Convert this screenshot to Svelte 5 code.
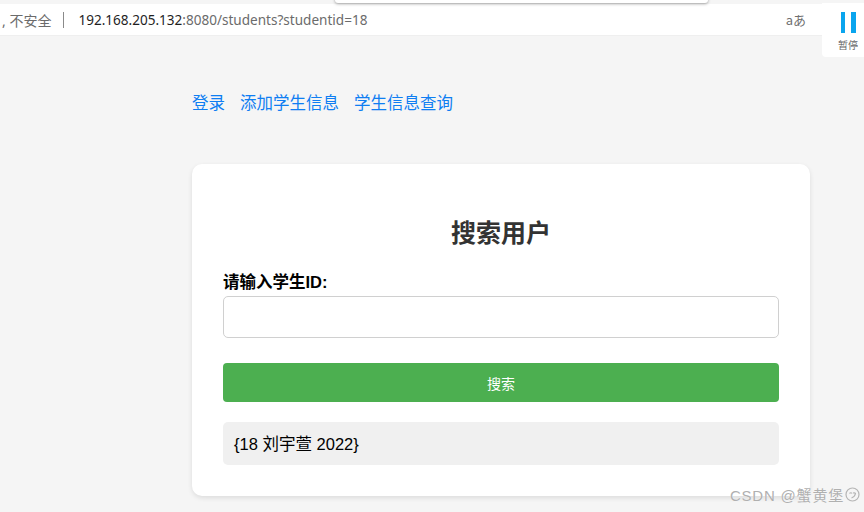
<script>
  let studentId = $state('');
</script>

<div class="page">
  <header class="toolbar">
    <div class="address">
      <span class="secure">, 不安全</span>
      <span class="divider"></span>
      <span class="url"><b>192.168.205.132</b>:8080/students?studentid=18</span>
    </div>
    <span class="read">aあ</span>
  </header>

  <main class="content">
    <nav class="links">
      <a href="#login">登录</a>
      <a href="#add">添加学生信息</a>
      <a href="#query">学生信息查询</a>
    </nav>

    <section class="card">
      <h2>搜索用户</h2>
      <label for="sid">请输入学生ID:</label>
      <input id="sid" type="text" bind:value={studentId} />
      <button type="button">搜索</button>
      <div class="result">{'{'}18 刘宇萱 2022{'}'}</div>
    </section>
  </main>

  <div class="popup"></div>

  <div class="pause">
    <span class="bars"><i></i><i></i></span>
    <span class="pause-label">暂停</span>
  </div>

  <div class="watermark">CSDN @蟹黄堡
    <svg width="15" height="15" viewBox="0 0 15 15" fill="none" stroke="#b5b5b5" stroke-width="1.2">
      <circle cx="7.5" cy="7.5" r="6.5" />
      <path d="M4.5 6.5 Q6 5 7 6.5 M8 6 Q10 5.5 10.5 6.5 Q10 9.5 6.5 11" />
    </svg>
  </div>
</div>

<style>
  :global(body) {
    margin: 0;
    background: #f5f5f5;
  }

  .page {
    position: relative;
    height: 512px;
    overflow: hidden;
    font-family: "Liberation Sans", "Noto Sans CJK SC", sans-serif;
  }

  .toolbar {
    display: flex;
    align-items: center;
    justify-content: space-between;
    box-sizing: border-box;
    height: 32px;
    margin-top: 4px;
    padding-right: 58px;
    background: #fff;
    border-bottom: 1px solid #efefef;
  }

  .address {
    display: flex;
    align-items: center;
    padding-left: 2px;
    font-family: "Noto Sans", "Noto Sans CJK SC", sans-serif;
    color: #6b6b6b;
  }

  .secure {
    font-size: 14px;
    white-space: pre;
  }

  .divider {
    width: 1px;
    height: 16px;
    margin: 0 14px 0 12px;
    background: #8a8a8a;
  }

  .url {
    font-size: 13.55px;
  }

  .url b {
    font-weight: 400;
    color: #1f1f1f;
  }

  .read {
    font-family: "Noto Sans CJK JP", sans-serif;
    font-size: 13px;
    color: #707070;
  }

  .content {
    padding: 49px 54px 0 192px;
  }

  .links {
    display: flex;
    gap: 15px;
    height: 34px;
    align-items: center;
  }

  .links a {
    font-size: 16.5px;
    color: #0f7ef2;
    text-decoration: none;
  }

  .card {
    display: flex;
    flex-direction: column;
    box-sizing: border-box;
    width: 618px;
    height: 332px;
    margin-top: 45px;
    padding: 52px 31px 0;
    background: #fff;
    border-radius: 10px;
    box-shadow: 0 2px 5px rgba(0, 0, 0, 0.1);
  }

  h2 {
    margin: 0 0 22px;
    font-size: 25px;
    line-height: 34px;
    font-weight: 700;
    text-align: center;
    color: #333;
  }

  label {
    font-size: 16.5px;
    line-height: 24px;
    font-weight: 700;
    color: #000;
    margin-top: -2px;
  }

  input {
    box-sizing: border-box;
    height: 42px;
    margin-top: 2px;
    border: 1.5px solid #d0d0d0;
    border-radius: 5px;
    background: #fff;
    outline: none;
  }

  button {
    height: 39px;
    margin-top: 25px;
    border: 0;
    border-radius: 4px;
    background: #4caf50;
    color: #fff;
    font-family: inherit;
    font-size: 14px;
  }

  .result {
    box-sizing: border-box;
    height: 43px;
    margin-top: 20px;
    padding: 0 11px;
    line-height: 44px;
    font-size: 16.5px;
    color: #000;
    background: #f0f0f0;
    border-radius: 5px;
  }

  .popup {
    position: absolute;
    top: -6px;
    left: 335px;
    width: 373px;
    height: 9px;
    background: #fff;
    border-radius: 3px;
    box-shadow: 0 1px 3px rgba(0, 0, 0, 0.35);
  }

  .pause {
    position: absolute;
    top: 3px;
    right: 0;
    box-sizing: border-box;
    width: 42px;
    height: 54px;
    padding-left: 10px;
    display: flex;
    flex-direction: column;
    align-items: center;
    background: #fff;
    border-radius: 0 0 0 4px;
  }

  .bars {
    display: flex;
    gap: 6px;
    margin-top: 9px;
  }

  .bars i {
    display: block;
    width: 4.5px;
    height: 21px;
    background: #0aa5ee;
  }

  .pause-label {
    margin-top: 6px;
    font-size: 10px;
    line-height: 14px;
    color: #666;
  }

  .watermark {
    position: absolute;
    right: 4px;
    bottom: 7px;
    display: flex;
    align-items: center;
    gap: 1px;
    font-size: 15px;
    letter-spacing: 0.8px;
    color: #b0b0b0;
    text-shadow: 0 0 1px #fff;
  }
</style>
